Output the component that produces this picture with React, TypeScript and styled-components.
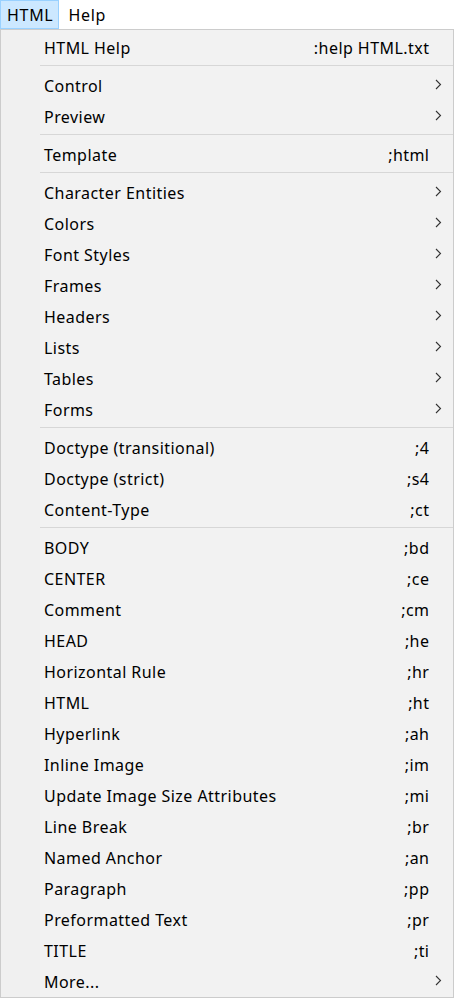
import React from "react";
import styled, { createGlobalStyle } from "styled-components";

const Global = createGlobalStyle`
  html, body { margin: 0; padding: 0; background: #ffffff; }
  body { font-family: "Noto Sans", "Open Sans", sans-serif; color: #000; }
`;

const Page = styled.div`
  width: 455px;
  height: 1000px;
  background: #ffffff;
  overflow: hidden;
`;

const MenuBar = styled.div`
  display: flex;
  height: 29px;
  background: #ffffff;
`;

const BarItem = styled.div<{ $active?: boolean }>`
  box-sizing: border-box;
  height: 29px;
  display: flex;
  align-items: center;
  padding: 1px ${(p) => (p.$active ? "5px 0 6px" : "8px 0 8px")};
  font-size: 16px;
  letter-spacing: 0.7px;
  background: ${(p) => (p.$active ? "#cce8ff" : "transparent")};
  border: 1px solid ${(p) => (p.$active ? "#99d1ff" : "transparent")};
`;

const Panel = styled.div`
  box-sizing: border-box;
  width: 454px;
  border: 1px solid #cccccc;
  padding: 1px 0;
  background: linear-gradient(to right, #f0f0f0 39px, #f2f2f2 39px);
`;

const Row = styled.div`
  box-sizing: border-box;
  display: grid;
  grid-template-columns: 1fr auto 24px;
  align-items: center;
  height: 31px;
  padding: 2px 0 0 43px;
  font-size: 16px;
  letter-spacing: 0.45px;
  white-space: nowrap;
`;

const Label = styled.span``;

const Shortcut = styled.span`
  text-align: right;
  margin-right: -0.45px;
`;

const ArrowCell = styled.span`
  display: flex;
  align-items: center;
  padding-left: 6px;
  margin-top: -2px;
`;

const Separator = styled.div`
  height: 7px;
  display: flex;
  align-items: center;
  margin-left: 39px;
  &::before {
    content: "";
    flex: 1;
    height: 1px;
    background: #d7d7d7;
  }
`;

const Chevron = () => (
  <svg width="7" height="11" viewBox="0 0 7 11">
    <path d="M1 1 L5.5 5.5 L1 10" fill="none" stroke="#333" strokeWidth="1.1" />
  </svg>
);

type Item = { label: string; shortcut?: string; sub?: boolean } | "sep";

const items: Item[] = [
  { label: "HTML Help", shortcut: ":help HTML.txt" },
  "sep",
  { label: "Control", sub: true },
  { label: "Preview", sub: true },
  "sep",
  { label: "Template", shortcut: ";html" },
  "sep",
  { label: "Character Entities", sub: true },
  { label: "Colors", sub: true },
  { label: "Font Styles", sub: true },
  { label: "Frames", sub: true },
  { label: "Headers", sub: true },
  { label: "Lists", sub: true },
  { label: "Tables", sub: true },
  { label: "Forms", sub: true },
  "sep",
  { label: "Doctype (transitional)", shortcut: ";4" },
  { label: "Doctype (strict)", shortcut: ";s4" },
  { label: "Content-Type", shortcut: ";ct" },
  "sep",
  { label: "BODY", shortcut: ";bd" },
  { label: "CENTER", shortcut: ";ce" },
  { label: "Comment", shortcut: ";cm" },
  { label: "HEAD", shortcut: ";he" },
  { label: "Horizontal Rule", shortcut: ";hr" },
  { label: "HTML", shortcut: ";ht" },
  { label: "Hyperlink", shortcut: ";ah" },
  { label: "Inline Image", shortcut: ";im" },
  { label: "Update Image Size Attributes", shortcut: ";mi" },
  { label: "Line Break", shortcut: ";br" },
  { label: "Named Anchor", shortcut: ";an" },
  { label: "Paragraph", shortcut: ";pp" },
  { label: "Preformatted Text", shortcut: ";pr" },
  { label: "TITLE", shortcut: ";ti" },
  { label: "More...", sub: true },
];

export default function App() {
  return (
    <Page>
      <Global />
      <MenuBar>
        <BarItem $active>HTML</BarItem>
        <BarItem>Help</BarItem>
      </MenuBar>
      <Panel>
        {items.map((it, i) =>
          it === "sep" ? (
            <Separator key={i} />
          ) : (
            <Row key={i}>
              <Label>{it.label}</Label>
              <Shortcut>{it.shortcut ?? ""}</Shortcut>
              <ArrowCell>{it.sub ? <Chevron /> : null}</ArrowCell>
            </Row>
          )
        )}
      </Panel>
    </Page>
  );
}
